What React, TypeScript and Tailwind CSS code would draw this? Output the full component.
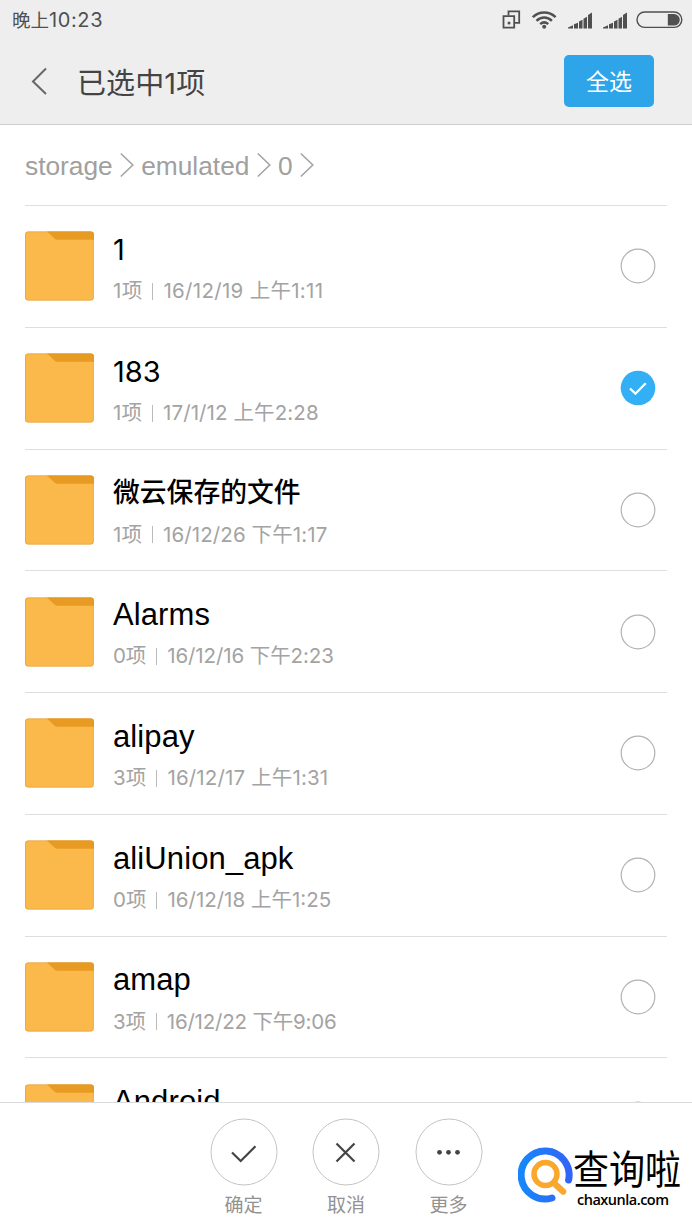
type Entry = {
  name: string
  font: string
  count?: string
  date?: string
  spacing?: string
  selected?: boolean
}

const ENTRIES: Entry[] = [
  { name: '1', count: '1项', date: '16/12/19 上午1:11', font: 'digits', spacing: 'tracking-[0.3px]' },
  { name: '183', count: '1项', date: '17/1/12 上午2:28', font: 'digits', spacing: 'tracking-[0.1px]', selected: true },
  { name: '微云保存的文件', count: '1项', date: '16/12/26 下午1:17', font: 'cjk', spacing: 'tracking-[0.1px]' },
  { name: 'Alarms', count: '0项', date: '16/12/16 下午2:23', font: 'latin', spacing: 'tracking-[-0.1px]' },
  { name: 'alipay', count: '3项', date: '16/12/17 上午1:31', font: 'latin', spacing: 'tracking-[0.15px]' },
  { name: 'aliUnion_apk', count: '0项', date: '16/12/18 上午1:25', font: 'latin', spacing: 'tracking-[0px]' },
  { name: 'amap', count: '3项', date: '16/12/22 下午9:06', font: 'latin', spacing: 'tracking-[-0.2px]' },
  { name: 'Android', font: 'latin' },
]

const NAME_FONTS: Record<string, string> = {
  digits: 'text-[29px]',
  cjk: 'text-[26.8px] font-medium',
  latin: "font-['Liberation_Sans',sans-serif] text-[31px] tracking-[0.1px]",
}

const ACTIONS = [
  { label: '确定', icon: <path d="M22 34.5l8.7 8.5L45.5 28.2" /> },
  { label: '取消', icon: <path d="M24.5 25.5l18 18M42.5 25.5l-18 18" /> },
  {
    label: '更多',
    icon: (
      <g fill="#444" stroke="none">
        <circle cx="24.5" cy="34.3" r="2.4" />
        <circle cx="33.5" cy="34.3" r="2.4" />
        <circle cx="42.5" cy="34.3" r="2.4" />
      </g>
    ),
  },
]

function Signal() {
  return (
    <svg width="24" height="17" viewBox="0 0 24 17" fill="#505050">
      <path d="M0 16.5v-1L5 13.3v3.2zM6 12.3l4-1.6v5.8H6zM11 9.6l3.5-1.8v8.7H11zM15.5 6.8l3.5-2v11.7h-3.5zM20 3l4-2.4v15.9h-4z" />
    </svg>
  )
}

function StatusBar() {
  return (
    <div className="flex h-10 items-center justify-between pl-3 pr-[9px] text-[#505050]">
      <div className="flex items-baseline leading-none">
        <span className="text-[18.5px]">晚上</span>
        <span className="text-[20px] tracking-[0.6px]">10:23</span>
      </div>
      <div className="flex items-center">
        <svg width="20" height="20" viewBox="0 0 20 20" fill="none" stroke="#505050" strokeWidth="1.8">
          <path d="M6.5 5.2V1.3h10.7v11.5h-4.4" />
          <path d="M1.5 6.2h10.7v11.5H1.5z" />
          <circle cx="7" cy="13" r="1.5" fill="#505050" stroke="none" />
        </svg>
        <svg className="ml-[10px]" width="26" height="20" viewBox="0 0 26 20" fill="none" stroke="#505050" strokeWidth="2.5">
          <path d="M.8 7.2C7.2.9 17.2.9 23.6 7.2M4.5 10.8c4.5-4.3 10.9-4.3 15.4 0M8.2 14.2c2.4-2.2 5.6-2.2 8 0" />
          <circle cx="12.2" cy="16.8" r="2" fill="#505050" stroke="none" />
        </svg>
        <div className="ml-[10px] flex gap-[11px]">
          <Signal />
          <Signal />
        </div>
        <svg className="ml-[9px]" width="47" height="18" viewBox="0 0 47 18" fill="none" stroke="#505050">
          <rect x="1" y="1" width="44.8" height="15.4" rx="7.7" strokeWidth="1.4" />
          <path d="M31.8 3h6.2a5.8 5.8 0 0 1 0 11.6h-6.2z" fill="#505050" stroke="none" />
        </svg>
      </div>
    </div>
  )
}

function Crumb({ label, className }: { label: string; className?: string }) {
  return (
    <div className={`flex items-center ${className ?? ''}`}>
      <span className="pt-[3px]">{label}</span>
      <svg className="ml-[7.5px]" width="14" height="26" viewBox="0 0 14 26" fill="none" stroke="#a4a4a4" strokeWidth="1.6">
        <path d="M.8 1.5L12.8 13 .8 24.5" />
      </svg>
    </div>
  )
}

function Folder() {
  return (
    <svg className="shrink-0" width="70" height="70" viewBox="0 0 70 70">
      <rect x="0" y=".5" width="68.8" height="69" rx="3" fill="#fbb94b" />
      <path d="M22 .5h44a3 3 0 0 1 3 3v5.3H33c-2.2 0-3.3-.8-4.6-2.2z" fill="#e79b22" />
      <rect x=".4" y=".8" width="68" height="68.4" rx="3" fill="none" stroke="#d89630" strokeOpacity=".55" strokeWidth=".8" />
    </svg>
  )
}

function Check({ selected }: { selected?: boolean }) {
  return (
    <svg width="36" height="36" viewBox="0 0 36 36" fill="none">
      {selected ? (
        <>
          <circle cx="18" cy="18" r="17.3" fill="#33b0f5" />
          <path d="M10 18.5l5.4 5.2 10.3-10.5" stroke="#fff" strokeWidth="2.3" />
        </>
      ) : (
        <circle cx="18" cy="18" r="16.8" stroke="#b2b2b2" strokeWidth="1.2" />
      )}
    </svg>
  )
}

function Logo() {
  return (
    <div className="absolute left-[518px] top-[1145px] flex">
      <svg width="55" height="58" viewBox="0 0 55 58" fill="none" strokeLinecap="round">
        <defs>
          <linearGradient id="ring" x1="0" y1="0" x2="1" y2="0">
            <stop offset="0" stopColor="#1687fb" />
            <stop offset="1" stopColor="#3264f7" />
          </linearGradient>
        </defs>
        <path d="M34 53A24 24 0 1 1 50.6 35" stroke="url(#ring)" strokeWidth="7" />
        <circle cx="27.5" cy="29" r="11.5" stroke="#f9a72d" strokeWidth="5.5" />
        <path d="M37 39l8 7.5" stroke="#f9a72d" strokeWidth="6.5" />
      </svg>
      <div className="flex flex-col text-black">
        <span className="origin-top scale-y-110 text-[36px] leading-[44px]">查询啦</span>
        <span className="pl-1 pt-[5px] font-['Open_Sans',sans-serif] text-[14.5px] font-semibold leading-3 tracking-[-0.5px]">
          chaxunla.com
        </span>
      </div>
    </div>
  )
}

export default function App() {
  return (
    <div className="relative flex h-[1230px] w-[692px] flex-col overflow-hidden bg-white font-['Inter','Noto_Sans_CJK_SC',sans-serif]">
      <header className="h-[125px] shrink-0 border-b border-[#cfcfcf] bg-[#eee]">
        <StatusBar />
        <div className="flex h-[82px] items-center pl-[31px] pr-[38px]">
          <svg width="17" height="28" viewBox="0 0 17 28" fill="none" stroke="#666" strokeWidth="2">
            <path d="M15 1.5L2 14.5l13 12.5" />
          </svg>
          <h1 className="ml-[29px] pt-[4px] text-[29px] leading-none tracking-[0.1px] text-[#444]">已选中1项</h1>
          <button className="ml-auto h-[52px] w-[90px] rounded-[5px] bg-[#2da5e8] pt-[3px] text-[23px] text-white">全选</button>
        </div>
      </header>

      <main className="flex-1 overflow-hidden px-[25px]">
        <nav className="flex h-[80px] items-center font-['Liberation_Sans',sans-serif] text-[26.3px] text-[#a0a0a0]">
          <Crumb label="storage" />
          <Crumb label="emulated" className="ml-[7px]" />
          <Crumb label="0" className="ml-[7px]" />
        </nav>
        <ul>
          {ENTRIES.map((entry) => (
            <li key={entry.name} className="flex h-[121.75px] items-center border-t border-[#dedede] pr-[11px]">
              <Folder />
              <div className="ml-[18px] flex-1 pt-[8px]">
                <div className={`flex h-[42px] items-center whitespace-nowrap leading-none text-black ${NAME_FONTS[entry.font]}`}>
                  {entry.name}
                </div>
                <div className={`flex h-[42px] items-center whitespace-nowrap text-[20.5px] text-[#a3a3a3] ${entry.spacing ?? ''}`}>
                  {entry.count && (
                    <>
                      <span>{entry.count}</span>
                      <span className="mx-[10px] h-[17px] w-px bg-[#bbb]" />
                      <span>{entry.date}</span>
                    </>
                  )}
                </div>
              </div>
              <Check selected={entry.selected} />
            </li>
          ))}
        </ul>
      </main>

      <footer className="flex h-[128px] shrink-0 justify-center gap-[35px] border-t border-[#dadada] bg-white pt-[15px]">
        {ACTIONS.map((action) => (
          <div key={action.label} className="flex w-[67.5px] flex-col items-center">
            <svg width="68" height="68" viewBox="0 0 68 68" fill="none" stroke="#444" strokeWidth="2.2">
              <circle cx="34" cy="34" r="33" stroke="#c4c4c4" strokeWidth="1" />
              {action.icon}
            </svg>
            <span className="mt-2 text-[19px] leading-6 text-[#929292]">{action.label}</span>
          </div>
        ))}
      </footer>
      <Logo />
    </div>
  )
}
